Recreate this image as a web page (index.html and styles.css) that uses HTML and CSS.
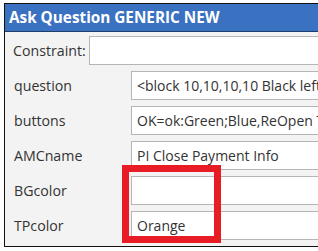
FILE: index.html
```html
<!DOCTYPE html>
<html lang="en">
  <head>
    <meta charset="UTF-8" />
    <title>Ask Question GENERIC NEW</title>
    <link rel="stylesheet" href="styles.css">
  </head>
  <body>
    <div class="dialog">
      <div class="title">Ask Question GENERIC NEW</div>
      <div class="content">
        <div class="constraint">
          <label for="constraint">Constraint:</label>
          <div class="field" id="constraint"></div>
        </div>
        <div class="row">
          <label>question</label>
          <div class="field">&lt;block 10,10,10,10 Black left middle</div>
        </div>
        <div class="row">
          <label>buttons</label>
          <div class="field">OK=ok:Green;Blue,ReOpen Ticket</div>
        </div>
        <div class="row">
          <label>AMCname</label>
          <div class="field">PI Close Payment Info</div>
        </div>
        <div class="row">
          <label>BGcolor</label>
          <div class="field"></div>
        </div>
        <div class="row">
          <label>TPcolor</label>
          <div class="field">Orange</div>
        </div>
      </div>
    </div>
    <div class="highlight"></div>
  </body>
</html>
```

FILE: styles.css
```css
* {
  margin: 0;
  box-sizing: border-box;
}
html,
body {
  overflow: hidden;
}
body {
  margin: 0;
  padding: 3px 0 0 4px;
  background-color: white;
  font-family: "Open Sans", "Liberation Sans", sans-serif;
  color: #333;
}
.dialog {
  width: 420px;
  border: 1px solid #111;
  background-color: #f3f3f3;
}
.title {
  height: 28px;
  padding: 3px 0 0 4px;
  background-color: #3a71c1;
  border-bottom: 1px solid #1e3d6b;
  color: white;
  font-size: 15.3px;
  font-weight: bold;
}
.content {
  padding: 4px 0 6px 0;
}
.constraint {
  display: flex;
  align-items: center;
  margin-bottom: 3px;
}
.constraint label {
  width: 84px;
  padding-left: 8px;
}
.row {
  display: flex;
  align-items: center;
  margin-top: 6px;
}
.row label {
  width: 126px;
  padding-left: 9px;
}
label {
  font-size: 14.2px;
  flex-shrink: 0;
}
.field {
  flex: 1;
  height: 29px;
  padding: 4px 0 0 5px;
  background-color: white;
  border: 1px solid #b5b5b5;
  font-size: 14px;
  white-space: nowrap;
  overflow: hidden;
}
.highlight {
  position: absolute;
  left: 122px;
  top: 165px;
  width: 99px;
  height: 78px;
  border: 7px solid #e81c24;
}
```
